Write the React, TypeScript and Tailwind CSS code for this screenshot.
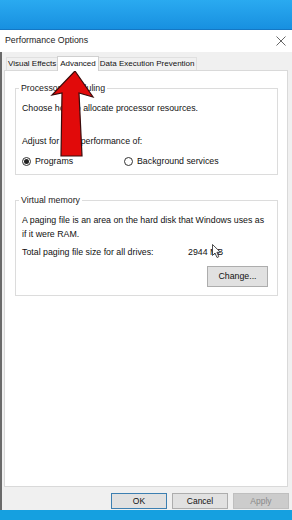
import React from "react";

const font = { fontFamily: '"Liberation Sans", Arial, sans-serif' };

function Radio({ checked }: { checked?: boolean }) {
    return (
        <span className="w-[9px] h-[9px] rounded-full border border-[#333] bg-white flex items-center justify-center shrink-0">
            {checked && <span className="w-[5px] h-[5px] rounded-full bg-[#222]"></span>}
        </span>
    );
}

function Btn({ label, kind }: { label: string; kind?: "default" | "disabled" }) {
    const cls =
        kind === "default"
            ? "border-[#3c7fb1] bg-[#e1e1e1] text-[#111]"
            : kind === "disabled"
            ? "border-[#bfbfbf] bg-[#cccccc] text-[#8a8a8a]"
            : "border-[#adadad] bg-[#e1e1e1] text-[#111]";
    return (
        <div className={`w-[56px] h-[16px] border flex items-center justify-center text-[8.5px] ${cls}`}>
            {label}
        </div>
    );
}

export default function App() {
    return (
        <div className="relative w-[292px] h-[520px] overflow-hidden bg-[#15a0e0]" style={font}>
            {/* desktop */}
            <div className="h-[30px] bg-gradient-to-b from-[#2aaaf0] to-[#1890e0] border-b border-[#1477c4]"></div>

            {/* window */}
            <div className="h-[480px] flex flex-col">
                <div className="h-[22px] bg-white flex items-center justify-between pl-[5px] pr-[6px]">
                    <span className="text-[8.8px] text-[#222]">Performance Options</span>
                    <svg width="10" height="10" viewBox="0 0 10 10">
                        <path d="M0.5 0.5 L9.5 9.5 M9.5 0.5 L0.5 9.5" stroke="#555" strokeWidth="0.9" fill="none" />
                    </svg>
                </div>

                <div className="flex-1 bg-[#f0f0f0] border-l-2 border-[#6a6a6a] pl-[2px] flex flex-col">
                    {/* tabs */}
                    <div className="mt-[3px] h-[15px] flex items-end pl-[2px] text-[8px] text-[#111]">
                        <div className="h-[13px] px-[1px] flex items-center border-t border-l border-[#e0e0e0]">Visual Effects</div>
                        <div className="h-[15px] px-[2px] flex items-center bg-white border-t border-l border-r border-[#d0d0d0] -mb-px relative z-10">Advanced</div>
                        <div className="h-[13px] px-[1px] flex items-center border-t border-r border-[#e0e0e0]">Data Execution Prevention</div>
                    </div>

                    {/* panel */}
                    <div className="w-[284px] h-[417px] bg-white border border-[#d9d9d9] pl-[10px] pt-[11px] text-[8.8px] text-[#111]">
                        <fieldset className="w-[263px] h-[93px] border border-[#dcdcdc] pl-[6px] pr-[4px]">
                            <legend className="px-[2px] -ml-[3px] text-[8.8px] text-[#222]">Processor scheduling</legend>
                            <div className="mt-[7px]">Choose how to allocate processor resources.</div>
                            <div className="mt-[20px]">Adjust for best performance of:</div>
                            <div className="mt-[6px] flex items-center">
                                <span className="flex items-center gap-[4px] w-[102px]">
                                    <Radio checked />
                                    Programs
                                </span>
                                <span className="flex items-center gap-[4px]">
                                    <Radio />
                                    Background services
                                </span>
                            </div>
                        </fieldset>

                        <fieldset className="mt-[19px] w-[263px] h-[102px] border border-[#dcdcdc] pl-[6px] pr-[4px]">
                            <legend className="px-[2px] -ml-[3px] text-[8.8px] text-[#222]">Virtual memory</legend>
                            <div className="mt-[6px] leading-[14px]">
                                A paging file is an area on the hard disk that Windows uses as
                                <br />
                                if it were RAM.
                            </div>
                            <div className="mt-[5px] flex">
                                <span className="w-[166px]">Total paging file size for all drives:</span>
                                <span>2944 MB</span>
                            </div>
                            <div className="mt-[7px] flex justify-end pr-[5px]">
                                <div className="w-[61px] h-[21px] border border-[#adadad] bg-[#e1e1e1] flex items-center justify-center">
                                    Change...
                                </div>
                            </div>
                        </fieldset>
                    </div>

                    {/* footer */}
                    <div className="mt-[6px] flex justify-end gap-[5px] pr-[3px]">
                        <Btn label="OK" kind="default" />
                        <Btn label="Cancel" />
                        <Btn label="Apply" kind="disabled" />
                    </div>
                </div>
            </div>

            {/* red annotation arrow */}
            <svg className="absolute left-0 top-0" width="292" height="520" viewBox="0 0 292 520">
                <path
                    d="M75 71 L93 97 L79 93 L82 156 L61 156 L62 93 L52 95 Z"
                    fill="#e10a0a"
                    stroke="#3a0b0b"
                    strokeWidth="1.2"
                    strokeLinejoin="miter"
                />
            </svg>

            {/* mouse cursor */}
            <svg className="absolute left-[212px] top-[244px]" width="10" height="15" viewBox="0 0 10 15">
                <path d="M0.5 0.5 L0.5 11.5 L3 9 L5 13.5 L6.8 12.7 L4.9 8.3 L8.5 8.3 Z" fill="white" stroke="#222" strokeWidth="0.8" />
            </svg>
        </div>
    );
}
